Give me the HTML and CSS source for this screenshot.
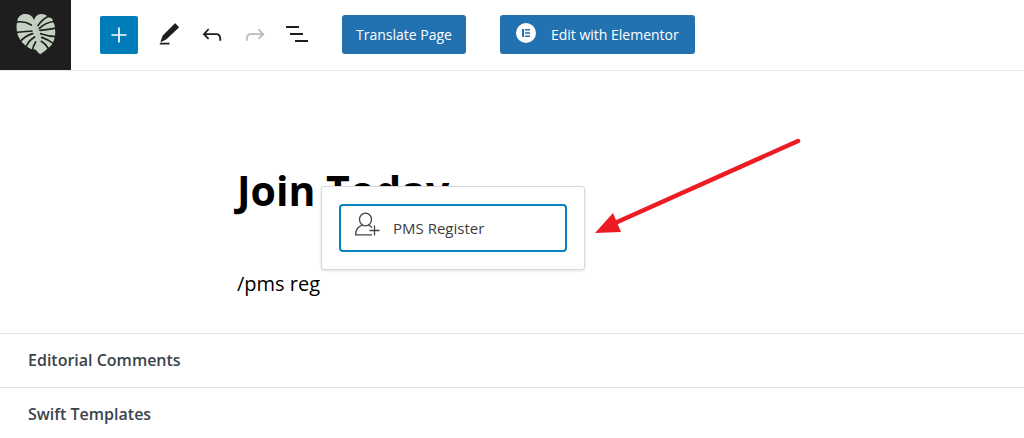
FILE: index.html
```html
<!DOCTYPE html>
<html lang="en">
<head>
    <meta charset="UTF-8">
    <meta name="viewport" content="width=device-width, initial-scale=1.0">
    <title>Edit Page</title>
    <link rel="stylesheet" href="styles.css">
</head>
<body>
    <header class="header">
        <a class="site-logo" href="#" aria-label="View Pages">
            <svg viewBox="0 0 120 126" width="40" height="42">
                <path fill="#c4d1c0" d="M54 22C51 8 38 1 24 3C12 5 5 14 4 24C1 34 1 46 3 56C5 70 12 80 18 88C26 97 36 104 45 108L60 110C63 117 69 121 73 124C79 118 88 115 93 108C102 102 110 94 113 84C117 74 119 60 117 48C117 38 115 32 111 27C113 18 104 14 96 13C90 3 76 1 66 5C58 9 56 16 54 22Z"/>
                <g stroke="#1e1e1e" stroke-linecap="round" fill="none">
                    <path stroke-width="5" d="M-2 28C16 24 33 28 46 36M-2 58C16 57 34 55 48 54M10 88C22 75 36 66 50 62M29 105C33 91 43 80 56 72M49 116C50 104 54 94 59 87"/>
                    <path stroke-width="5" d="M99 8C85 16 73 26 66 38M118 24C100 27 82 34 70 46M122 45C104 49 86 51 72 52M121 71C103 70 86 66 74 62M113 92C102 84 90 77 77 73M97 107C91 97 83 89 76 85"/>
                </g>
                <path stroke="#aabaa6" stroke-width="2" fill="none" d="M55 24C59 42 66 61 71 86"/>
            </svg>
        </a>
        <div class="tools">
            <button class="tool inserter" type="button" aria-label="Add block">
                <svg viewBox="0 0 24 24" width="26" height="26"><path d="M18 11.2h-5.200V5h-1.600v6.200H5v1.600h6.200V19h1.600v-6.200H19v-1.600z"/></svg>
            </button>
            <button class="tool" type="button" aria-label="Tools">
                <svg viewBox="0 0 24 24" width="26" height="26"><path d="M20.900 4.300 18 1.400Q17.600 1 17.100 1.500L6.200 12.400l-2 5.600q0 .6.600.4l4.900-2.400L20.900 5.200q.4-.5 0-.9zM3.500 20.800h9v-1.600h-9z"/></svg>
            </button>
            <button class="tool" type="button" aria-label="Undo">
                <svg viewBox="0 0 24 24" width="26" height="26"><path d="M18.900 11.300c-.6-.6-1.400-.9-2.300-.9H6.500l3-3.500-1.200-1-4.900 5.400 4.900 4.900 1.100-1.100-2.900-3h10c.5 0 .9.200 1.300.5 1 1 1 3 1 4.300v.4h1.700v-.3c0-1.500 0-4.200-1.600-5.700z"/></svg>
            </button>
            <button class="tool" type="button" aria-label="Redo" disabled>
                <svg viewBox="0 0 24 24" width="26" height="26"><path d="M15.700 5.900l-1.200 1 3 3.500h-10c-.9 0-1.700.3-2.300.9-1.600 1.500-1.600 4.200-1.600 5.700v.3h1.700v-.4c0-1.300 0-3.300 1-4.300.4-.3.800-.5 1.300-.5h10l-2.900 3 1.100 1.100 4.900-4.900z"/></svg>
            </button>
            <button class="tool" type="button" aria-label="Document overview">
                <svg viewBox="0 0 26 26" width="26" height="26"><path d="M1 4h13v2H1zM5 11h13v2H5zM10 18h13v2H10z"/></svg>
            </button>
        </div>
        <div class="actions">
            <button class="btn" type="button">Translate Page</button>
            <button class="btn btn-elementor" type="button">
                <svg viewBox="0 0 20 20" width="20" height="20">
                    <circle cx="10" cy="8" r="10" fill="#fff"/>
                    <path fill="#2271b1" d="M6 4h2v8H6zM9 4h5v1.600H9zM9 7.200h5v1.600H9zM9 10.400h5V12H9z"/>
                </svg>
                Edit with Elementor
            </button>
        </div>
    </header>

    <main class="editor">
        <h1>Join Today</h1>
        <div class="block">
            <p>/pms reg</p>
            <div class="popover">
                <button class="option" type="button">
                    <svg viewBox="0 0 26 26" width="26" height="26" fill="none" stroke="#444" stroke-width="1.300">
                        <ellipse cx="10.500" cy="7.500" rx="6" ry="6.300"/>
                        <path d="M7.500 13.200C3 14.500.6 18 .6 22.800H17M13.500 13.200c1.500.6 2.700 1.400 3.500 2.500M19.500 13.500v10M14.500 18.500h10"/>
                    </svg>
                    PMS Register
                </button>
                <svg class="arrow" viewBox="0 0 208 98" width="208" height="98">
                    <path d="M203 5 20 87" stroke="#ed1c24" stroke-width="4.500" stroke-linecap="round"/>
                    <path d="M0 97 18 77 26 96z" fill="#ed1c24"/>
                </svg>
            </div>
        </div>
    </main>

    <section class="panels">
        <button class="panel" type="button">Editorial Comments</button>
        <button class="panel" type="button">Swift Templates</button>
    </section>
</body>
</html>
```
FILE: styles.css
```css
* {
    box-sizing: border-box;
}

body {
    margin: 0;
    background-color: #fff;
    color: #1e1e1e;
    font-family: "Segoe UI", "Open Sans", sans-serif;
}

button {
    margin: 0;
    border: none;
    background: none;
    font-family: inherit;
    cursor: pointer;
}

svg {
    display: block;
    flex-shrink: 0;
    overflow: visible;
}

.header {
    display: flex;
    align-items: center;
    height: 71px;
    padding-bottom: 1px;
    border-bottom: 1px solid #e8e8e8;
}

.site-logo {
    display: flex;
    align-items: center;
    justify-content: center;
    align-self: stretch;
    width: 71px;
    height: 70px;
    padding-bottom: 3px;
    background-color: #1e1e1e;
}

.site-logo svg {
    overflow: hidden;
}

.tools {
    display: flex;
    gap: 5px;
    margin-left: 29px;
}

.tool {
    display: flex;
    align-items: center;
    justify-content: center;
    width: 38px;
    height: 38px;
    padding: 0;
    fill: #1e1e1e;
}

.tool:disabled {
    fill: #bbb;
}

.inserter {
    margin-right: 7px;
    border-radius: 2px;
    background-color: #007cba;
    fill: #fff;
}

.actions {
    display: flex;
    gap: 34px;
    margin-left: 25px;
}

.btn {
    display: flex;
    align-items: center;
    gap: 13px;
    height: 39px;
    padding: 0 14px;
    border-radius: 3px;
    background-color: #2271b1;
    color: #fff;
    font-size: 14px;
    white-space: nowrap;
}

.btn-elementor {
    gap: 15px;
    padding: 0 16px;
}

.editor {
    max-width: 550px;
    margin: 0 auto;
    padding: 91px 0 33px;
    color: #000;
}

h1 {
    margin: 0;
    font-size: 41px;
    line-height: 56px;
}

.block {
    position: relative;
    width: fit-content;
    margin-top: 50px;
}

p {
    margin: 0;
    font-size: 20px;
    line-height: 32px;
}

/* slash command menu, opens above the caret */
.popover {
    position: absolute;
    left: 84px;
    bottom: 30px;
    width: 264px;
    padding: 17px;
    border: 1px solid #d8d8d8;
    border-radius: 3px;
    background-color: #fff;
    box-shadow: 0 1px 3px rgba(0, 0, 0, 0.12);
}

.option {
    display: flex;
    align-items: center;
    gap: 12px;
    width: 100%;
    height: 48px;
    padding: 0 14px;
    border: 2px solid #0a81bd;
    border-radius: 4px;
    color: #3c3c3c;
    font-size: 15px;
}

.option svg {
    margin-bottom: 6px;
}

.arrow {
    position: absolute;
    left: 273px;
    bottom: 35px;
}

.panel {
    display: block;
    width: 100%;
    height: 54px;
    padding: 0 28px 1px;
    border-top: 1px solid #e2e2e2;
    color: #3c434a;
    font-size: 16px;
    font-weight: 600;
    text-align: left;
}
```
